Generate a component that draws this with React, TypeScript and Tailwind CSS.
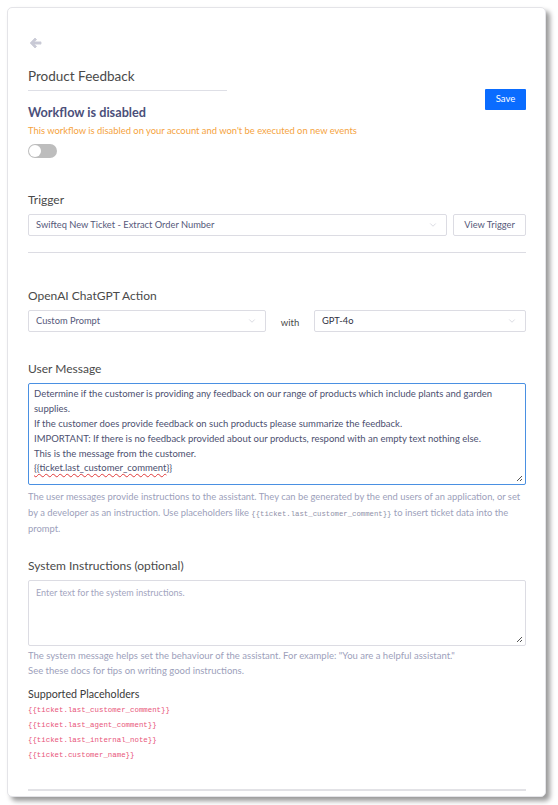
import { ChevronDown } from 'lucide-react'

const placeholders = [
  '{{ticket.last_customer_comment}}',
  '{{ticket.last_agent_comment}}',
  '{{ticket.last_internal_note}}',
  '{{ticket.customer_name}}',
]

function Select({ value, className, dark }: { value: string; className?: string; dark?: boolean }) {
  return (
    <div
      className={`h-[22px] border border-[#dcdce3] rounded-[2px] flex items-center justify-between pl-[7px] pr-[8px] bg-white ${className ?? ''}`}
    >
      <span className={`text-[9.3px] ${dark ? 'text-[#2f3142]' : 'text-[#56597a]'}`}>{value}</span>
      <ChevronDown className="w-[10px] h-[10px] text-[#c4c5d0]" strokeWidth={1.5} />
    </div>
  )
}

function ResizeHandle() {
  return (
    <svg className="absolute right-[2px] bottom-[2px]" width="8" height="8" viewBox="0 0 8 8">
      <path d="M7 2 L2 7 M7 5 L5 7" stroke="#555" strokeWidth="1" />
    </svg>
  )
}

export default function App() {
  return (
    <div className="min-h-screen bg-white pt-[7px] pl-[7px]" style={{ fontFamily: 'Lato, sans-serif' }}>
      <div className="w-[539px] h-[790px] bg-white border border-[#e4e4e8] rounded-[5px] shadow-[4px_4px_5px_rgba(0,0,0,0.4)] pl-[20px] pr-[19px] pt-[29px] overflow-hidden">
        {/* back */}
        <svg width="13" height="12" viewBox="0 0 13 12" className="ml-[1px]">
          <path
            d="M6 1 L1.2 6 L6 11 L7.6 9.4 L5.2 7.1 L12 7.1 L12 4.9 L5.2 4.9 L7.6 2.6 Z"
            fill="#c9cad6"
            stroke="#c9cad6"
            strokeWidth="0.8"
            strokeLinejoin="round"
          />
        </svg>

        {/* header */}
        <div className="flex items-start justify-between mt-[17px]">
          <div>
            <div className="w-[199px] border-b border-[#dedfe6] pb-[4px] text-[13.5px] text-[#4a4a4a]">
              Product Feedback
            </div>
            <div className="mt-[12px] text-[12.7px] font-bold text-[#4b4f7a]">Workflow is disabled</div>
            <div className="mt-[2px] text-[9.4px] text-[#f5a340]">
              This workflow is disabled on your account and won't be executed on new events
            </div>
            <div className="mt-[6px] w-[29px] h-[14px] rounded-full bg-[#bdbdbd] relative">
              <div className="absolute left-[1px] top-[1px] w-[12px] h-[12px] rounded-full bg-white" />
            </div>
          </div>
          <button className="mt-[23px] w-[41px] h-[21px] bg-[#0a6cff] text-white text-[9.5px] rounded-[1px]">
            Save
          </button>
        </div>

        {/* trigger */}
        <div className="mt-[33px] text-[12px] text-[#4a4a4a]">Trigger</div>
        <div className="mt-[5px] flex gap-[6px]">
          <Select value="Swifteq New Ticket - Extract Order Number" className="flex-1" />
          <button className="h-[22px] w-[73px] border border-[#dcdce3] rounded-[2px] text-[9.3px] text-[#56597a] bg-white">
            View Trigger
          </button>
        </div>
        <div className="mt-[16px] border-t border-[#dcdce3]" />

        {/* action */}
        <div className="mt-[34px] text-[12px] text-[#4a4a4a]">OpenAI ChatGPT Action</div>
        <div className="mt-[5px] flex items-center">
          <Select value="Custom Prompt" className="w-[238px]" />
          <span className="w-[48px] text-center text-[9.5px] text-[#4a4a4a] pt-[4px]">with</span>
          <Select value="GPT-4o" className="flex-1" dark />
        </div>

        {/* user message */}
        <div className="mt-[28px] text-[12px] text-[#4a4a4a]">User Message</div>
        <div className="mt-[5px] h-[102px] border border-[#4a90e2] rounded-[2px] relative px-[5px] pt-[3px] text-[9.5px] leading-[14.8px] text-[#4d5070]">
          <div>Determine if the customer is providing any feedback on our range of products which include plants and garden supplies.</div>
          <div>If the customer does provide feedback on such products please summarize the feedback.</div>
          <div>IMPORTANT: If there is no feedback provided about our products, respond with an empty text nothing else.</div>
          <div>This is the message from the customer.</div>
          <div>
            <span className="underline decoration-wavy decoration-[#e03a3a] decoration-[1px] underline-offset-2">
              {'{{ticket.last_customer_comment'}
            </span>
            {'}}'}
          </div>
          <ResizeHandle />
        </div>
        <p className="mt-[4px] max-w-[497px] text-[9.4px] leading-[16px] text-[#9d9fbb]">
          The user messages provide instructions to the assistant. They can be generated by the end users of an application, or set by a developer as an instruction. Use placeholders like{' '}
          <code className="text-[7.3px] leading-none text-[#8f91a8]" style={{ fontFamily: '"Liberation Mono", monospace' }}>
            {'{{ticket.last_customer_comment}}'}
          </code>{' '}
          to insert ticket data into the prompt.
        </p>

        {/* system instructions */}
        <div className="mt-[20px] text-[12px] text-[#4a4a4a]">System Instructions (optional)</div>
        <div className="mt-[5px] h-[66px] border border-[#dcdce3] rounded-[2px] relative px-[7px] pt-[5px] text-[9px] text-[#a3a5c0]">
          Enter text for the system instructions.
          <ResizeHandle />
        </div>
        <p className="mt-[2px] text-[9.5px] leading-[15px] text-[#9d9fbb]">
          The system message helps set the behaviour of the assistant. For example: "You are a helpful assistant."
          <br />
          See these docs for tips on writing good instructions.
        </p>

        {/* placeholders */}
        <div className="mt-[8px] text-[10.7px] text-[#3a3a3a]">Supported Placeholders</div>
        <div className="mt-[1px] flex flex-col" style={{ fontFamily: '"Liberation Mono", monospace' }}>
          {placeholders.map((p) => (
            <span key={p} className="text-[7.4px] leading-[15px] text-[#e8557a]">
              {p}
            </span>
          ))}
        </div>
        <div className="mt-[26px] border-t-[2px] border-[#e2e2e6]" />
      </div>
    </div>
  )
}
